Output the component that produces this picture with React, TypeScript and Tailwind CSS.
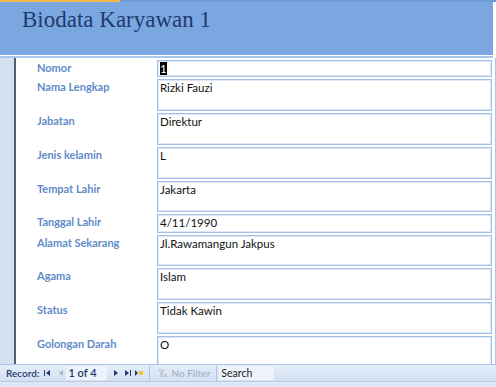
import React from "react";

type Field = { label: string; value: string; h: string; highlight?: boolean };

const FIELDS: Field[] = [
  { label: "Nomor", value: "1", h: "h-[17px]", highlight: true },
  { label: "Nama Lengkap", value: "Rizki Fauzi", h: "h-[32px]" },
  { label: "Jabatan", value: "Direktur", h: "h-[32px]" },
  { label: "Jenis kelamin", value: "L", h: "h-[32px]" },
  { label: "Tempat Lahir", value: "Jakarta", h: "h-[31px]" },
  { label: "Tanggal Lahir", value: "4/11/1990", h: "h-[19px]" },
  { label: "Alamat Sekarang", value: "Jl.Rawamangun Jakpus", h: "h-[31px]" },
  { label: "Agama", value: "Islam", h: "h-[32px]" },
  { label: "Status", value: "Tidak Kawin", h: "h-[32px]" },
  { label: "Golongan Darah", value: "O", h: "h-[40px]" },
];

function NavIcon({ kind, disabled }: { kind: "first" | "prev" | "next" | "last" | "new"; disabled?: boolean }) {
  const c = disabled ? "#A8B4C4" : "#1F3A6E";
  return (
    <svg width="10" height="8" viewBox="0 0 10 8">
      {kind === "first" && (
        <>
          <rect x="2" y="1" width="1" height="6" fill={c} />
          <path d="M8 1 L4 4 L8 7 Z" fill={c} />
        </>
      )}
      {kind === "prev" && <path d="M7 1 L3 4 L7 7 Z" fill={c} />}
      {kind === "next" && <path d="M3 1 L7 4 L3 7 Z" fill={c} />}
      {kind === "last" && (
        <>
          <path d="M2 1 L6 4 L2 7 Z" fill={c} />
          <rect x="7" y="1" width="1" height="6" fill={c} />
        </>
      )}
      {kind === "new" && (
        <>
          <path d="M1 1 L4 4 L1 7 Z" fill={c} />
          <rect x="5" y="2" width="4" height="4" fill="#F2C12E" />
        </>
      )}
    </svg>
  );
}

export default function App() {
  return (
    <div className="w-[496px] h-[387px] overflow-hidden bg-white flex flex-col relative">
      {/* HEADER */}
      <div className="flex h-[2px]">
        <div className="w-[120px] bg-[#F3B54A]" />
        <div className="flex-1 bg-[#6E9AD6]" />
      </div>
      <div className="h-[53px] w-[493px] bg-[#7BA7E1] pl-[22px] pt-[5px]">
        <span className="text-[23px] leading-[26px] text-[#1F3A6E] font-['Liberation_Serif',serif]">
          Biodata Karyawan 1
        </span>
      </div>
      <div className="h-[1px] bg-white" />
      <div className="h-[2px] bg-[#A9C6EE] w-[493px]" />

      {/* BODY */}
      <div className="flex h-[306px] overflow-hidden">
        <div className="w-[16px] bg-[#D3E2F3] border-r-2 border-[#5A5F66] shrink-0" />
        <div className="flex-1 flex flex-col gap-[2px] pt-[2px] pl-[21px] pr-[3px] border-r border-[#A9C6EE] font-['Lato',sans-serif]">
          {FIELDS.map((f) => (
            <div key={f.label} className="flex shrink-0">
              <div className="w-[120px] pt-[1px] text-[11px] leading-[14px] font-bold text-[#5F8BC8]">
                {f.label}
              </div>
              <div
                className={`flex-1 ${f.h} border border-[#A2BFE8] shadow-[inset_0_0_0_1px_#DCE7F7] px-[2px] pt-[1px] text-[11.5px] leading-[14px] text-[#111]`}
              >
                {f.highlight ? <span className="bg-black text-white">{f.value}</span> : f.value}
              </div>
            </div>
          ))}
        </div>
      </div>

      {/* NAV BAR */}
      <div className="h-[17px] flex items-center border-t border-[#A9C4E8] bg-gradient-to-b from-[#E4EDF9] to-[#D3E1F4] text-[10px] font-['Lato',sans-serif] text-[#1F3A6E]">
        <span className="pl-[6px] pr-[3px] font-semibold">Record:</span>
        <NavIcon kind="first" />
        <span className="w-[4px]" />
        <NavIcon kind="prev" disabled />
        <div className="w-[41px] h-[14px] bg-[#EEF3FB] pl-[2px] leading-[14px] text-[11px] font-semibold">1 of 4</div>
        <span className="w-[4px]" />
        <NavIcon kind="next" />
        <span className="w-[2px]" />
        <NavIcon kind="last" />
        <span className="w-[1px]" />
        <NavIcon kind="new" />
        <div className="w-[1px] h-[15px] bg-[#AFC3DF] ml-[5px]" />
        <span className="ml-[8px] text-[#A8B4C4] flex items-center gap-[3px] font-semibold">
          <svg width="10" height="9" viewBox="0 0 10 9">
            <path d="M1 1 L6 1 L4 4 L4 8 L3 7 L3 4 Z" fill="none" stroke="#A8B4C4" strokeWidth="0.8" />
            <path d="M6 5 L9 8 M9 5 L6 8" stroke="#C88" strokeWidth="0.8" />
          </svg>
          No Filter
        </span>
        <div className="w-[1px] h-[15px] bg-[#AFC3DF] ml-[6px]" />
        <div className="w-[55px] h-[14px] bg-[#EEF3FB] ml-[2px] pl-[2px] leading-[14px] text-[10.5px] text-[#222]">Search</div>
        <div className="flex-1" />
      </div>
      <div className="flex-1 border-t border-[#B7CBE6] bg-[#DFE9F6]" />
    </div>
  );
}
